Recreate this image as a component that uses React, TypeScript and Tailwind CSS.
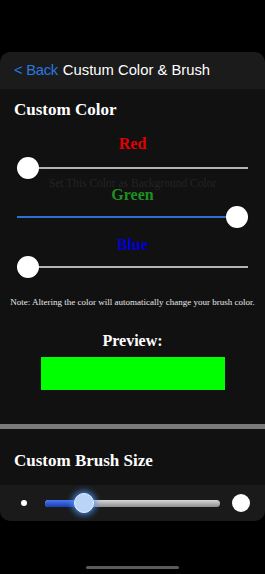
import React from "react";

const serif = { fontFamily: '"Liberation Serif", "DejaVu Serif", serif' };

function LineSlider({ pos, filled }: { pos: number; filled: boolean }) {
  return (
    <div className="relative h-[22px] mx-[17px]">
      <div
        className={`absolute left-0 right-0 top-[10px] h-[2px] ${filled ? "bg-[#2d6fd6]" : "bg-[#b4b4b4]"}`}
      />
      <div
        className="absolute top-0 w-[22px] h-[22px] rounded-full bg-white shadow"
        style={{ left: `calc(${pos}% - ${(pos / 100) * 22}px)` }}
      />
    </div>
  );
}

export default function App() {
  return (
    <div className="w-[265px] h-[574px] bg-black flex flex-col overflow-hidden">
      <div className="h-[52px] shrink-0" />
      <div className="rounded-t-[10px] overflow-hidden">
        <div
          className="h-[37px] bg-[#1b1b1b] flex items-center pl-[14px] gap-[5px] text-[14.8px]"
          style={{ fontFamily: '"Liberation Sans", Arial, sans-serif' }}
        >
          <span className="text-[#2a78e0] tracking-[-0.3px]">&lt; Back</span>
          <span className="text-white">Custum Color &amp; Brush</span>
        </div>
        <div className="bg-[#111111] flex flex-col" style={serif}>
          <div className="h-[41px] flex items-center pl-[14px] text-white font-bold text-[17px]">
            Custom Color
          </div>
          <div className="mt-[4px] h-[20px] leading-[20px] text-center text-[16px] font-bold text-[#e00000]">
            Red
          </div>
          <div className="mt-[3px]">
            <LineSlider pos={0} filled={false} />
          </div>
          <div className="h-[9px] leading-[9px] text-center text-[11.5px] text-[#242424] whitespace-nowrap">
            Set This Color as Background Color
          </div>
          <div className="-mt-[2px] h-[18px] leading-[18px] text-center text-[16px] font-bold text-[#1f8f1f]">
            Green
          </div>
          <div className="mt-[2px]">
            <LineSlider pos={100} filled={true} />
          </div>
          <div className="mt-[7px] h-[20px] leading-[20px] text-center text-[16px] font-bold text-[#0000d0]">
            Blue
          </div>
          <div className="mt-[1px]">
            <LineSlider pos={0} filled={false} />
          </div>
          <div className="mt-[18px] h-[12px] leading-[12px] text-center text-[9px] text-[#e8e8e8] whitespace-nowrap">
            Note: Altering the color will automatically change your brush color.
          </div>
          <div className="mt-[23px] h-[20px] leading-[20px] text-center text-[16px] font-bold text-white">
            Preview:
          </div>
          <div className="mt-[6px] mx-auto w-[184px] h-[33px] bg-[#00ff00]" />
          <div className="mt-[34px] h-[5px] bg-[#7a7a7a]" />
          <div className="h-[56px] pt-[8px] flex items-center pl-[14px] text-white font-bold text-[17px]">
            Custom Brush Size
          </div>
        </div>
        <div className="h-[36px] bg-[#1a1a1a] rounded-b-[10px] flex items-center">
          <div className="ml-[21px] w-[6px] h-[6px] rounded-full bg-white" />
          <div className="ml-[18px] relative w-[175px] h-[7px] rounded-full bg-gradient-to-b from-[#d8d8d8] to-[#8e8e8e]">
            <div className="absolute left-0 top-0 h-[7px] w-[40px] rounded-l-full bg-gradient-to-b from-[#4a78f0] to-[#1c3cb0]" />
            <div className="absolute left-[29px] -top-[6.5px] w-[20px] h-[20px] rounded-full bg-[#b9d4f7] border border-[#e6f0ff] shadow-[0_0_6px_2px_rgba(80,150,255,0.8)]" />
          </div>
          <div className="ml-[12px] w-[18px] h-[18px] rounded-full bg-white" />
        </div>
      </div>
      <div className="flex-1 flex items-end justify-center pb-[5px]">
        <div className="w-[93px] h-[3px] rounded-full bg-[#5a5a5a]" />
      </div>
    </div>
  );
}
